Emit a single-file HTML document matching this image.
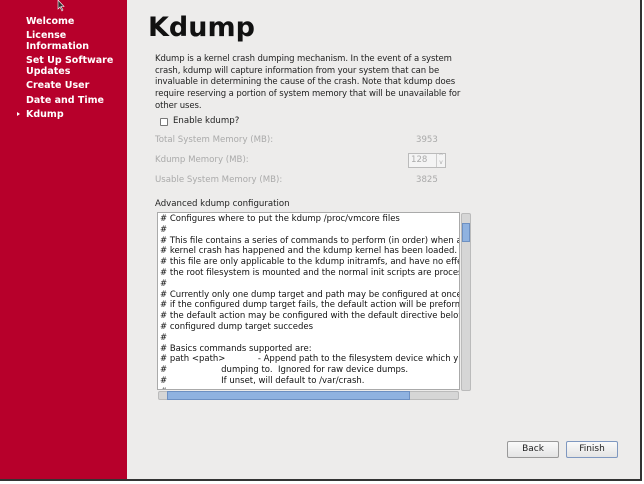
<!DOCTYPE html>
<html><head><meta charset="utf-8"><style>
*{margin:0;padding:0;box-sizing:border-box}
body{width:644px;height:484px;background:#fff;position:relative;overflow:hidden;font-family:"DejaVu Sans","Liberation Sans",sans-serif}
#frame{position:absolute;left:0;top:0;width:642px;height:481px;background:#edeceb;border-right:2px solid #333;border-bottom:2px solid #333}
#side{position:absolute;left:0;top:0;width:127px;height:479px;background:#b7002b}
.nav{position:absolute;left:26px;color:#fff;font-weight:bold;font-size:9.5px;line-height:11px}
.t{position:absolute;font-size:8.6px;color:#222;white-space:nowrap}
.g{color:#aaa}
#ta{position:absolute;left:157px;top:212px;width:303px;height:178px;background:#fff;border:1px solid #aaa;overflow:hidden}
#ta pre{font-family:"DejaVu Sans",sans-serif;font-size:8.5px;line-height:10.8px;color:#111;padding:1px 0 0 2px;white-space:pre}
.btn{position:absolute;top:441px;height:17px;width:52px;border:1px solid #999;border-radius:2px;background:linear-gradient(#fafafa,#e4e4e4);font-size:9px;text-align:center;line-height:15px;color:#222}
</style></head><body>
<div id="frame"></div>
<div id="side"></div>
<svg style="position:absolute;left:57px;top:0" width="10" height="12"><path d="M1 0 L1 9 L3 7 L5 11 L6 10 L4 6.5 L7 6.5 Z" fill="#333" stroke="#fff" stroke-width=".6"/></svg>
<div class="nav" style="top:16px">Welcome</div>
<div class="nav" style="top:30px">License<br>Information</div>
<div class="nav" style="top:55px">Set Up Software<br>Updates</div>
<div class="nav" style="top:80px">Create User</div>
<div class="nav" style="top:95px">Date and Time</div>
<div class="nav" style="top:109px">Kdump</div>
<div style="position:absolute;left:17px;top:112px;width:0;height:0;border-left:3px solid #fff;border-top:2.5px solid transparent;border-bottom:2.5px solid transparent"></div>
<div style="position:absolute;left:148px;top:12px;font-size:27px;font-weight:bold;color:#111">Kdump</div>
<div class="t" style="left:155px;top:54px;line-height:11.7px;font-size:8.5px;letter-spacing:-0.1px">Kdump is a kernel crash dumping mechanism. In the event of a system<br>crash, kdump will capture information from your system that can be<br>invaluable in determining the cause of the crash. Note that kdump does<br>require reserving a portion of system memory that will be unavailable for<br>other uses.</div>
<div style="position:absolute;left:160px;top:118px;width:8px;height:8px;border:1px solid #777;background:#fff;border-radius:1px"></div>
<div class="t" style="left:173px;top:116px">Enable kdump?</div>
<div class="t g" style="left:155px;top:135px">Total System Memory (MB):</div>
<div class="t g" style="left:416px;top:135px">3953</div>
<div class="t g" style="left:155px;top:155px">Kdump Memory (MB):</div>
<div style="position:absolute;left:408px;top:153px;width:38px;height:15px;border:1px solid #bbb;background:#f4f4f4"></div>
<div class="t g" style="left:411px;top:155px">128</div>
<div style="position:absolute;left:436px;top:154px;width:9px;height:13px;border-left:1px solid #ccc;font-size:6px;color:#aaa;line-height:6px;text-align:center">^<br>v</div>
<div class="t g" style="left:155px;top:175px">Usable System Memory (MB):</div>
<div class="t g" style="left:416px;top:175px">3825</div>
<div class="t" style="left:155px;top:199px">Advanced kdump configuration</div>
<div id="ta"><pre># Configures where to put the kdump /proc/vmcore files
#
# This file contains a series of commands to perform (in order) when a
# kernel crash has happened and the kdump kernel has been loaded.  Di
# this file are only applicable to the kdump initramfs, and have no effect
# the root filesystem is mounted and the normal init scripts are proces
#
# Currently only one dump target and path may be configured at once
# if the configured dump target fails, the default action will be preforme
# the default action may be configured with the default directive below
# configured dump target succedes
#
# Basics commands supported are:
# path &lt;path&gt;            - Append path to the filesystem device which y
#                    dumping to.  Ignored for raw device dumps.
#                    If unset, will default to /var/crash.
#</pre></div>
<div style="position:absolute;left:461px;top:213px;width:10px;height:178px;background:#d6d6d6;border:1px solid #bbb;border-radius:2px"></div>
<div style="position:absolute;left:462px;top:223px;width:8px;height:19px;background:#8fb2e0;border:1px solid #6d90c2"></div>
<div style="position:absolute;left:158px;top:391px;width:301px;height:9px;background:#d6d6d6;border:1px solid #bbb;border-radius:2px"></div>
<div style="position:absolute;left:167px;top:391px;width:243px;height:9px;background:#8fb2e0;border:1px solid #6d90c2"></div>
<div class="btn" style="left:507px">Back</div>
<div class="btn" style="left:566px;border-color:#7f98c0">Finish</div>
</body></html>
